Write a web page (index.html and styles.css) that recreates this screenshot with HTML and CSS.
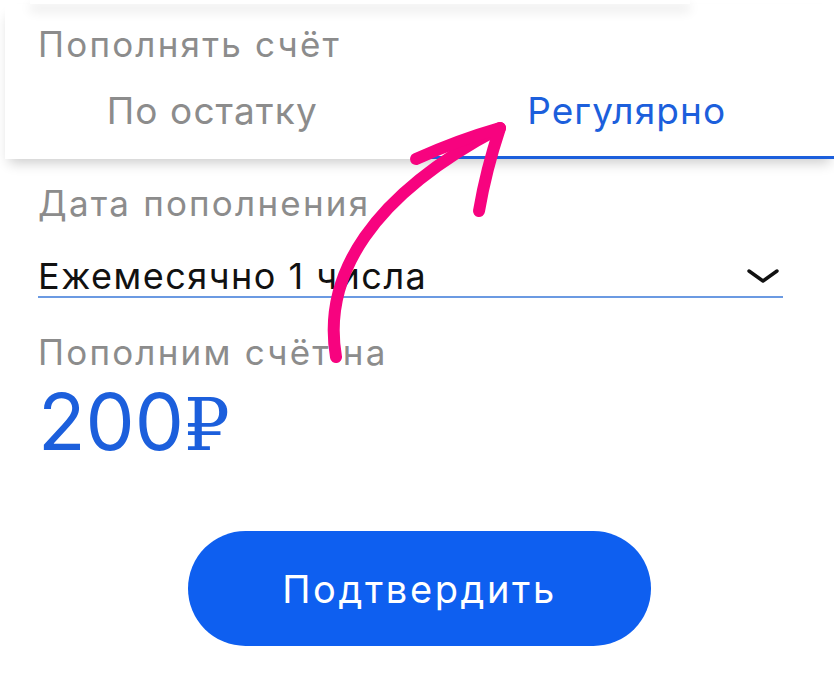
FILE: index.html
```html
<!DOCTYPE html>
<html lang="ru">
<head>
    <meta charset="UTF-8">
    <meta name="viewport" content="width=device-width, initial-scale=1.0">
    <title>Пополнение счёта</title>
    <link rel="stylesheet" href="styles.css">
</head>
<body>

    <div class="prev-card"></div>

    <div class="mode-card">
        <p class="label mode-label">Пополнять счёт</p>
        <div class="tabs">
            <div class="tab">По остатку</div>
            <div class="tab active">Регулярно</div>
        </div>
    </div>

    <div class="form">
        <p class="label date-label">Дата пополнения</p>
        <div class="select">
            <span>Ежемесячно 1 числа</span>
            <svg class="chevron" width="32" height="16" viewBox="0 0 32 16">
                <path d="M2 3 L16 13 L30 3" fill="none" stroke="#111" stroke-width="3.4" stroke-linecap="round" stroke-linejoin="round"/>
            </svg>
        </div>
        <p class="label sum-label">Пополним счёт на</p>
        <p class="amount">200<span class="rub">₽</span></p>
    </div>

    <button class="confirm">Подтвердить</button>

    <!-- pink hand-drawn arrow on top of the screenshot -->
    <svg class="scribble" width="834" height="679" viewBox="0 0 834 679">
        <path d="M336 357 C 322 275, 372 195, 500 128" fill="none" stroke="#f7037f" stroke-width="12" stroke-linecap="round"/>
        <path d="M416 159 Q 458 140, 500 128 Q 486 170, 479 211" fill="none" stroke="#f7037f" stroke-width="12" stroke-linecap="round" stroke-linejoin="round"/>
    </svg>

</body>
</html>
```

FILE: styles.css
```css
body {
    margin: 0;
    font-family: Inter, "Open Sans", Arial, sans-serif;
    background: #fff;
    color: #111;
    width: 834px;
    height: 679px;
    overflow: hidden;
    position: relative;
}
p {
    margin: 0;
}
.prev-card {
    height: 4px;
    margin: 0 144px 0 30px;
    background: #fff;
    box-shadow: 0 6px 12px rgba(0, 0, 0, 0.16);
    position: relative;
    z-index: 1;
}
.mode-card {
    margin-left: 5px;
    padding-top: 18px;
    background: #fff;
    box-shadow: 0 8px 12px -4px rgba(0, 0, 0, 0.2);
    position: relative;
}
.label {
    font-size: 35px;
    line-height: 44px;
    letter-spacing: 2.2px;
    color: #8c8c8c;
}
.mode-label {
    padding-left: 33px;
}
.tabs {
    display: grid;
    grid-template-columns: 1fr 1fr;
    margin-top: 23px;
}
.tab {
    text-align: center;
    font-size: 37px;
    line-height: 44px;
    letter-spacing: 1.1px;
    color: #8c8c8c;
    padding-bottom: 23px;
    border-bottom: 3px solid transparent;
}
.tab.active {
    color: #1c5fdc;
    border-bottom-color: #1c5fdc;
}
.form {
    padding: 0 51px 0 38px;
}
.date-label {
    margin-top: 22px;
}
.select {
    display: flex;
    justify-content: space-between;
    align-items: center;
    margin-top: 31px;
    font-size: 36px;
    line-height: 40px;
    letter-spacing: 1.5px;
    color: #111;
    border-bottom: 2px solid #6b9ae2;
}
.chevron {
    margin-right: 4px;
}
.sum-label {
    margin-top: 32px;
}
.amount {
    font-size: 78px;
    line-height: 80px;
    margin-top: 8px;
    color: #1c5fdc;
}
.rub {
    font-family: "DejaVu Serif", "Liberation Serif", serif;
    font-size: 72px;
}
.confirm {
    display: block;
    width: 463px;
    height: 115px;
    margin: 66px 0 0 188px;
    border: none;
    border-radius: 58px;
    background: #0e5ff0;
    color: #fff;
    font-family: Inter, "Open Sans", Arial, sans-serif;
    font-size: 38px;
    letter-spacing: 2.6px;
    cursor: pointer;
}
.scribble {
    position: absolute;
    top: 0;
    left: 0;
}
```
